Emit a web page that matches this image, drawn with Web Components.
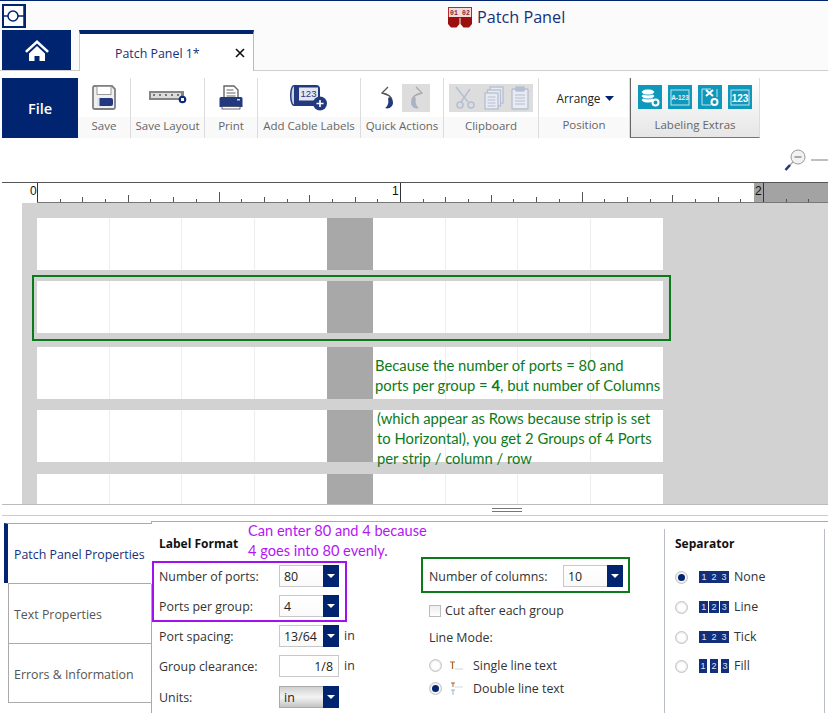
<!DOCTYPE html>
<html>
<head>
<meta charset="utf-8">
<title>Patch Panel</title>
<style>
    html, body { margin: 0; padding: 0; background: #fff; }
    body { width: 828px; height: 713px; overflow: hidden; font-family: "Open Sans", "Noto Sans", sans-serif; font-size: 12px; color: #333; }
    app-root { display: block; }
</style>
</head>
<body>
<app-root>
    <title-bar></title-bar>
    <tab-strip></tab-strip>
    <ribbon-bar>
        <ribbon-group width="53" label="Save">
            <svg width="24" height="25" viewBox="0 0 24 25">
                <path d="M1 2.500a1.500 1.500 0 0 1 1.500-1.500H20l3 3v18.500a1.500 1.500 0 0 1-1.500 1.500H2.500A1.500 1.500 0 0 1 1 22.500z" fill="#efefef" stroke="#808080" stroke-width="1.800"/>
                <rect x="5" y="1.500" width="14" height="8" fill="#fff" stroke="#9a9a9a"/>
                <rect x="5" y="13" width="16" height="8" rx="2" fill="#22397f"/>
                <rect x="5" y="13" width="2.500" height="8" fill="#dfe3ee"/>
            </svg>
        </ribbon-group>
        <ribbon-group width="74" label="Save Layout" top="12">
            <svg width="38" height="14" viewBox="0 0 38 14">
                <rect x="0" y="1" width="35" height="9" fill="#858585"/>
                <rect x="2" y="3" width="30" height="5" fill="#dcdcdc"/>
                <g fill="#777"><rect x="4" y="4" width="2" height="2"/><rect x="10" y="4" width="2" height="2"/><rect x="16" y="4" width="2" height="2"/><rect x="22" y="4" width="2" height="2"/><rect x="28" y="4" width="2" height="2"/></g>
                <circle cx="33.500" cy="9.500" r="3.800" fill="#0c2a78"/>
                <rect x="32" y="8" width="3" height="3" fill="#fff"/>
            </svg>
        </ribbon-group>
        <ribbon-group width="53" label="Print">
            <svg width="24" height="25" viewBox="0 0 24 25">
                <path d="M5 1h10l4 4v8H5z" fill="#fff" stroke="#666" stroke-width="1.400"/>
                <path d="M7.500 5h7M7.500 8h9M7.500 11h9" stroke="#666" stroke-width="1.200"/>
                <path d="M2 12h20a1.500 1.500 0 0 1 1.500 1.500V22H.5v-8.500A1.500 1.500 0 0 1 2 12z" fill="#22397f"/>
                <rect x="3" y="21.500" width="18" height="2.500" fill="#fff" stroke="#445" stroke-width=".8"/>
                <rect x="18" y="14" width="3" height="1.500" fill="#cfd6e8"/>
            </svg>
        </ribbon-group>
        <ribbon-group width="103" label="Add Cable Labels" top="6">
            <svg width="38" height="27" viewBox="0 0 38 27">
                <path d="M4 1h22a4 4 0 0 1 4 4v13a4 4 0 0 1-4 4H4C1.500 22 0 17 0 11.500S1.500 1 4 1z" fill="#22397f"/>
                <path d="M4 2.500C2.500 2.500 1.500 7 1.500 11.500S2.500 20.500 4 20.500" fill="#cdd3e3"/>
                <rect x="9" y="3.500" width="19" height="13" fill="#e4e7ef"/>
                <text x="18.500" y="13" font-size="9.500" text-anchor="middle" fill="#22397f" font-family="Liberation Sans, sans-serif">123</text>
                <circle cx="30" cy="19.500" r="7" fill="#22397f"/>
                <path d="M26.500 19.500h7M30 16v7" stroke="#fff" stroke-width="1.600"/>
            </svg>
        </ribbon-group>
        <ribbon-group width="83" label="Quick Actions" top="6">
            <div style="display:flex;gap:6px;align-items:center;margin-left:6px">
                <svg width="16" height="24" viewBox="0 0 16 24">
                    <path d="M8 1 2 7l5 2M2 7c5 1 10 3 10 8" fill="none" stroke="#555" stroke-width="1.300"/>
                    <path d="M9 11c4 2 5 6 3 9-2 2.500-5 3-7 2 3-2 4-6 3-9z" fill="#22397f"/>
                </svg>
                <div style="width:28px;height:28px;background:#dddddd;display:flex;align-items:center;justify-content:center">
                    <svg width="16" height="24" viewBox="0 0 16 24">
                        <path d="M8 1l6 6-5 2M14 7C9 8 4 10 4 15" fill="none" stroke="#a9a9a9" stroke-width="1.300"/>
                        <path d="M7 11c-4 2-5 6-3 9 2 2.500 5 3 7 2-3-2-4-6-3-9z" fill="#a9b2c6"/>
                    </svg>
                </div>
            </div>
        </ribbon-group>
        <ribbon-group width="95" label="Clipboard" top="6">
            <div style="width:84px;height:28px;background:#dddddd;display:flex;align-items:center;justify-content:space-around">
                <svg width="24" height="24" viewBox="0 0 24 24" fill="none" stroke="#b4bfd2" stroke-width="1.500">
                    <path d="M3 1l12 15M17 3 8 16"/>
                    <circle cx="7" cy="19" r="3"/><circle cx="18" cy="19" r="3"/>
                </svg>
                <svg width="20" height="24" viewBox="0 0 20 24" fill="#e8ebf1" stroke="#b4bfd2" stroke-width="1.300">
                    <rect x="6" y="1" width="13" height="16"/>
                    <rect x="3.500" y="4" width="13" height="16"/>
                    <rect x="1" y="7" width="13" height="16"/>
                    <path d="M3.500 11h8M3.500 14h8M3.500 17h8M3.500 20h8" stroke-width="1"/>
                </svg>
                <svg width="18" height="24" viewBox="0 0 18 24" fill="#e8ebf1" stroke="#b4bfd2" stroke-width="1.300">
                    <rect x="1" y="3" width="16" height="20" rx="1"/>
                    <rect x="5" y="1" width="8" height="4" fill="#b4bfd2"/>
                    <path d="M4 9h10M4 12h10M4 15h10M4 18h10" stroke-width="1"/>
                </svg>
            </div>
        </ribbon-group>
        <ribbon-group width="91" label="Position" top="12" low>
            <span style="color:#222;font-size:11.800px;display:flex;align-items:center;gap:5px;margin-left:3px">Arrange <svg width="9" height="5" viewBox="0 0 9 5"><path d="M0 0h9L4.500 5z" fill="#00246f"/></svg></span>
        </ribbon-group>
        <ribbon-group width="130" label="Labeling Extras" top="7" extras low>
            <div style="display:flex;gap:6px">
                <svg width="24" height="24" viewBox="0 0 24 24">
                    <rect width="24" height="24" fill="#0e99bc"/>
                    <g fill="#fff" stroke="#0e99bc" stroke-width=".8"><ellipse cx="10" cy="15" rx="6.500" ry="3"/><ellipse cx="10" cy="11" rx="6.500" ry="3"/><ellipse cx="10" cy="7" rx="6.500" ry="3"/></g>
                    <circle cx="17.500" cy="17.500" r="3" fill="none" stroke="#fff" stroke-width="2"/>
                </svg>
                <svg width="24" height="24" viewBox="0 0 24 24">
                    <rect width="24" height="24" fill="#0e99bc"/>
                    <rect x="3" y="5" width="18" height="15" fill="none" stroke="#bfe3ed"/>
                    <text x="12" y="15" font-size="6.500" font-weight="700" text-anchor="middle" fill="#e4f3f7" font-family="Liberation Sans, sans-serif">A-123</text>
                </svg>
                <svg width="24" height="24" viewBox="0 0 24 24">
                    <rect width="24" height="24" fill="#0e99bc"/>
                    <path d="M13 4H4v16h9" fill="none" stroke="#bfe3ed"/>
                    <path d="M19 4v8" stroke="#bfe3ed"/>
                    <path d="M8 5l7 6M15 5l-7 6" stroke="#fff" stroke-width="2"/>
                    <circle cx="16.500" cy="17" r="3" fill="none" stroke="#fff" stroke-width="2"/>
                </svg>
                <svg width="24" height="24" viewBox="0 0 24 24">
                    <rect width="24" height="24" fill="#0e99bc"/>
                    <rect x="3" y="5" width="18" height="15" fill="none" stroke="#bfe3ed"/>
                    <text x="12" y="16.500" font-size="10" font-weight="700" text-anchor="middle" fill="#fff" font-family="Liberation Sans, sans-serif">123</text>
                </svg>
            </div>
        </ribbon-group>
    </ribbon-bar>
    <zoom-bar></zoom-bar>
    <ruler-bar></ruler-bar>
    <label-canvas>
        <label-strip gap="15"></label-strip>
        <label-strip gap="11"></label-strip>
        <label-strip gap="14">
            <span style="display:block;padding:8px 0 0 2px">Because the number of ports = 80 and<br>ports per group = <b>4</b>, but number of Columns</span>
        </label-strip>
        <label-strip gap="11">
            <span style="display:block;padding:0 0 0 4px;margin-top:-2px">(which appear as Rows because strip is set<br>to Horizontal), you get 2 Groups of 4 Ports<br>per strip / column / row</span>
        </label-strip>
        <label-strip gap="12" height="30"></label-strip>
    </label-canvas>
    <split-grip></split-grip>
    <props-panel></props-panel>
</app-root>

<script>
    const NAVY = "#00246f";

    class TitleBar extends HTMLElement {
        constructor() {
            super();
            this.attachShadow({ mode: "open" });
            this.shadowRoot.innerHTML = `
                <style>
                    :host { display: flex; height: 29px; box-sizing: content-box; border-top: 1px solid ${NAVY}; background: #fbfbfb; position: relative; padding-left: 2px; }
                    .logo { margin-top: 3px; width: 24px; height: 24px; }
                    .title { position: absolute; left: 448px; top: 4px; display: flex; align-items: center; gap: 5px; color: #17307a; font-size: 16.200px; line-height: 24px; }
                </style>
                <svg class="logo" viewBox="0 0 24 24">
                    <rect x="0" y="0" width="24" height="24" fill="${NAVY}"/>
                    <rect x="2" y="2" width="20" height="20" fill="#fff"/>
                    <path d="M2 12h20M22 2v20" stroke="${NAVY}" stroke-width="1.500"/>
                    <circle cx="11" cy="12" r="5" fill="#fff" stroke="${NAVY}" stroke-width="1.500"/>
                </svg>
                <div class="title">
                    <svg width="24" height="21" viewBox="0 0 24 21">
                        <rect x="0.500" y="0.500" width="23" height="10" fill="#f4dcdc" stroke="#b52a2a"/>
                        <text x="6" y="8" font-size="6.500" font-weight="700" text-anchor="middle" fill="#8f1c1c" font-family="Liberation Mono, monospace">01</text>
                        <text x="18" y="8" font-size="6.500" font-weight="700" text-anchor="middle" fill="#8f1c1c" font-family="Liberation Mono, monospace">02</text>
                        <path d="M0 10h11.500v7l-3 3.500h-5.500l-3-3.500zM12.500 10H24v7l-3 3.500h-5.500l-3-3.500z" fill="#9c0f0f"/>
                    </svg>
                    <span>Patch Panel</span>
                </div>
            `;
        }
    }
    customElements.define("title-bar", TitleBar);

    class TabStrip extends HTMLElement {
        constructor() {
            super();
            this.attachShadow({ mode: "open" });
            this.shadowRoot.innerHTML = `
                <style>
                    :host { display: flex; height: 41px; background: #fbfbfb; padding-left: 2px; border-bottom: 1px solid #cfcfcf; box-sizing: border-box; }
                    .home { width: 69px; height: 40px; background: ${NAVY}; display: flex; align-items: center; justify-content: center; }
                    .tab { margin-left: 8px; width: 175px; height: 41px; box-sizing: border-box; background: #fff; border-top: 4px solid ${NAVY}; border-left: 1px solid #ccc; border-right: 1px solid #bbb; display: flex; align-items: center; color: #17307a; font-size: 12.400px; padding: 1px 0 0 35px; }
                    .close { margin-left: auto; margin-right: 8px; width: 10px; height: 10px; }
                </style>
                <div class="home">
                    <svg width="24" height="23" viewBox="0 0 24 23">
                        <path d="M12 1 0 12l1.800 1.800L12 4.500l10.200 9.300L24 12z" fill="#fff"/>
                        <path d="M4 14.500 12 7l8 7.500V22h-5.500v-5h-5v5H4z" fill="#fff"/>
                    </svg>
                </div>
                <div class="tab">
                    <span>Patch Panel 1*</span>
                    <svg class="close" viewBox="0 0 10 10"><path d="M1 1l8 8M9 1 1 9" stroke="#111" stroke-width="1.600"/></svg>
                </div>
            `;
        }
    }
    customElements.define("tab-strip", TabStrip);

    class RibbonBar extends HTMLElement {
        constructor() {
            super();
            this.attachShadow({ mode: "open" });
            this.shadowRoot.innerHTML = `
                <style>
                    :host { display: flex; height: 60px; margin-top: 7px; padding-left: 2px; background: #fff; }
                    .file { width: 76px; background: ${NAVY}; color: #fff; font-size: 14.500px; font-weight: 600; display: flex; align-items: center; justify-content: center; padding-top: 1px; box-sizing: border-box; }
                </style>
                <div class="file">File</div>
                <slot></slot>
            `;
        }
    }
    customElements.define("ribbon-bar", RibbonBar);

    class RibbonGroup extends HTMLElement {
        constructor() {
            super();
            this.attachShadow({ mode: "open" });
            this.shadowRoot.innerHTML = `
                <style>
                    :host { display: flex; flex-direction: column; box-sizing: border-box; border-right: 1px solid #dcdcdc; height: 60px; }
                    :host([extras]) { border-left: 1px solid #666; border-bottom: 1px solid #777; border-right: 1px solid #ddd; background: linear-gradient(#fff, #e6e6e6); }
                    .top { height: 39px; box-sizing: border-box; display: flex; justify-content: center; align-items: flex-start; }
                    .label { flex: 1; background: #f9f9f9; color: #666; font-size: 11.500px; line-height: 17px; text-align: center; white-space: nowrap; }
                    :host([low]) .label { line-height: 15px; }
                    :host([extras]) .label { background: none; }
                </style>
                <div class="top"><slot></slot></div>
                <div class="label"></div>
            `;
        }

        connectedCallback() {
            this.style.width = `${this.getAttribute("width")}px`;
            this.shadowRoot.querySelector(".label").textContent = this.getAttribute("label");
            this.shadowRoot.querySelector(".top").style.paddingTop = `${this.getAttribute("top") || 7}px`;
        }
    }
    customElements.define("ribbon-group", RibbonGroup);

    class ZoomBar extends HTMLElement {
        constructor() {
            super();
            this.attachShadow({ mode: "open" });
            this.shadowRoot.innerHTML = `
                <style>
                    :host { display: flex; height: 44px; justify-content: flex-end; align-items: center; background: #fff; }
                </style>
                <svg width="46" height="24" viewBox="0 0 46 24">
                    <circle cx="16" cy="9" r="7" fill="#f2f2f2" stroke="#999"/>
                    <path d="M12.500 9h7" stroke="#888" stroke-width="1.400"/>
                    <path d="M11 14 4 21" stroke="#aaa" stroke-width="1.500"/>
                    <path d="M8 17 3.500 22" stroke="#22397f" stroke-width="2.600"/>
                    <path d="M29 12h17" stroke="#aaa" stroke-width="1.500"/>
                </svg>
            `;
        }
    }
    customElements.define("zoom-bar", ZoomBar);

    class RulerBar extends HTMLElement {
        constructor() {
            super();
            this.attachShadow({ mode: "open" });
            let ticks = "";
            const inch = 363;
            for (let i = 0; i <= 32; i++) {
                const x = 37.5 + Math.round(i * inch / 16);
                let h = 3;
                if (i % 16 === 0) h = 19;
                else if (i % 8 === 0) h = 10;
                else if (i % 4 === 0) h = 7;
                else if (i % 2 === 0) h = 5;
                ticks += `<path d="M${x} 20V${20 - h}" stroke="${i % 16 === 0 ? "#333" : "#555"}" stroke-width="1"/>`;
            }
            for (let i = 33; i < 39; i++) {
                const x = 37.5 + Math.round(i * inch / 16);
                ticks += `<path d="M${x} 20V17" stroke="#555"/>`;
            }
            this.shadowRoot.innerHTML = `
                <style>
                    :host { display: block; height: 21px; }
                    svg { display: block; }
                    text { font: 12px "Liberation Sans", sans-serif; fill: #111; }
                </style>
                <svg width="828" height="21" viewBox="0 0 828 21">
                    <rect x="37" y="1" width="717" height="19" fill="#fff"/>
                    <rect x="754" y="1" width="74" height="19" fill="#a3a3a3"/>
                    <path d="M2 .5H828" stroke="#555"/>
                    <path d="M37 20.500H828" stroke="#777"/>
                    ${ticks}
                    <text x="30" y="13">0</text>
                    <text x="392" y="13">1</text>
                    <text x="755" y="13">2</text>
                </svg>
            `;
        }
    }
    customElements.define("ruler-bar", RulerBar);

    class LabelCanvas extends HTMLElement {
        constructor() {
            super();
            this.attachShadow({ mode: "open" });
            this.shadowRoot.innerHTML = `
                <style>
                    :host { display: block; height: 301px; margin-left: 22px; background: #d2d2d2; position: relative; overflow: hidden; padding-left: 15px; box-sizing: border-box; }
                    .mark { position: absolute; left: 10px; top: 72px; width: 639px; height: 66px; box-sizing: border-box; border: 2px solid #0a7a1a; }
                </style>
                <slot></slot>
                <div class="mark"></div>
            `;
        }
    }
    customElements.define("label-canvas", LabelCanvas);

    class LabelStrip extends HTMLElement {
        constructor() {
            super();
            this.attachShadow({ mode: "open" });
            this.shadowRoot.innerHTML = `
                <style>
                    :host { display: grid; grid-template-columns: 72.500px 72.500px 72.500px 72.500px 46px 72.500px 72.500px 72.500px 1fr; width: 626px; height: 52px; position: relative; background: #fff; }
                    div { box-sizing: border-box; border-right: 1px solid #eee; }
                    .gap { background: #a8a8a8; border: 0; }
                    .last { border: 0; }
                    .note { position: absolute; left: 336px; top: 0; right: 0; color: #0c7a1c; font-family: Lato, "Liberation Sans", sans-serif; font-size: 14.800px; line-height: 20px; white-space: nowrap; }
                </style>
                <div></div><div></div><div></div><div style="border:0"></div><div class="gap"></div><div></div><div></div><div></div><div class="last"></div>
                <section class="note"><slot></slot></section>
            `;
        }

        connectedCallback() {
            this.style.marginTop = `${this.getAttribute("gap")}px`;
            if (this.hasAttribute("height")) this.style.height = `${this.getAttribute("height")}px`;
        }
    }
    customElements.define("label-strip", LabelStrip);

    class SplitGrip extends HTMLElement {
        constructor() {
            super();
            this.attachShadow({ mode: "open" });
            this.shadowRoot.innerHTML = `
                <style>
                    :host { display: flex; height: 12px; box-sizing: border-box; border-top: 1px solid #bbb; border-bottom: 1px solid #ccc; margin-left: 2px; padding: 3px 0 0 490px; background: #fff; }
                    i { display: block; width: 30px; border-top: 1px solid #777; border-bottom: 1px solid #777; height: 2px; }
                </style>
                <i></i>
            `;
        }
    }
    customElements.define("split-grip", SplitGrip);

    class DropBox extends HTMLElement {
        constructor() {
            super();
            this.attachShadow({ mode: "open" });
            this.shadowRoot.innerHTML = `
                <style>
                    :host { display: flex; width: 60px; height: 22px; box-sizing: border-box; border: 1px solid #c8c8c8; background: linear-gradient(#fff, #fafafa); font-size: 12.400px; color: #222; align-items: center; }
                    :host([metal]) { background: linear-gradient(#d0d0d0, #f4f4f4 50%, #c4c4c4); border-color: #aaa; }
                    span { flex: 1; padding: 2px 0 0 4px; }
                    b { width: 16px; height: 22px; margin-right: -1px; background: ${NAVY}; display: flex; align-items: center; justify-content: center; }
                </style>
                <span><slot></slot></span>
                <b><svg width="8" height="4" viewBox="0 0 8 4"><path d="M0 0h8L4 4z" fill="#fff"/></svg></b>
            `;
        }
    }
    customElements.define("drop-box", DropBox);

    class RadioDot extends HTMLElement {
        constructor() {
            super();
            this.attachShadow({ mode: "open" });
            this.shadowRoot.innerHTML = `
                <style>
                    :host { display: flex; width: 13px; height: 13px; box-sizing: border-box; border: 1px solid #c4c4c4; border-radius: 50%; background: #fff; box-shadow: inset 0 0 2px #bbb; align-items: center; justify-content: center; flex: none; }
                    :host([on]) i { display: block; width: 7px; height: 7px; border-radius: 50%; background: ${NAVY}; }
                </style>
                <i></i>
            `;
        }
    }
    customElements.define("radio-dot", RadioDot);

    class SepSample extends HTMLElement {
        constructor() {
            super();
            this.attachShadow({ mode: "open" });
        }

        connectedCallback() {
            const kind = this.getAttribute("kind");
            const gap = kind === "fill" ? 3 : kind === "line" ? 1 : 0;
            const cells = ["1", "2", "3"].map((n) => `<span>${n}</span>`).join("");
            this.shadowRoot.innerHTML = `
                <style>
                    :host { display: flex; width: 30px; height: 12px; gap: ${gap}px; flex: none; }
                    :host([kind="fill"]) { height: 14px; }
                    span { flex: 1; background: #132f7c; color: #dfe5f2; font: 9px/12px "Liberation Sans", sans-serif; text-align: center; }
                    :host([kind="fill"]) span { line-height: 14px; }
                </style>
                ${cells}
            `;
        }
    }
    customElements.define("sep-sample", SepSample);

    class PropsPanel extends HTMLElement {
        constructor() {
            super();
            this.attachShadow({ mode: "open" });
            this.shadowRoot.innerHTML = `
                <style>
                    :host { display: flex; height: 197px; position: relative; background: #fff; font-size: 12.400px; color: #333; line-height: 16px; }
                    .tabs { width: 151px; padding: 7px 0 0 4px; box-sizing: border-box; flex: none; }
                    .tab { height: 60px; box-sizing: border-box; border: 1px solid #aaa; border-bottom: 0; border-right: 0; margin-left: 4px; padding: 2px 0 0 5px; display: flex; align-items: center; color: #555; white-space: nowrap; }
                    .tab:last-child { height: 60px; border-bottom: 1px solid #aaa; padding-top: 3px; }
                    .tab.on { border-left: 4px solid ${NAVY}; margin-left: 0; padding-left: 6px; color: #17307a; }
                    .body { flex: 1; display: flex; position: relative; border-top: 1px solid #aaa; margin-top: 5px; border-left: 1px solid #aaa; }
                    .blank { position: absolute; left: -1px; top: 2px; width: 1px; height: 60px; background: #fff; }
                    .col1 { width: 269px; padding: 14px 0 0 7px; box-sizing: border-box; flex: none; }
                    .col2 { width: 243px; padding: 43px 0 0 8px; box-sizing: border-box; flex: none; }
                    .col3 { width: 161px; margin-top: 7px; border-left: 1px solid #b8bcc4; border-right: 1px solid #b8bcc4; padding: 7px 0 0 10px; box-sizing: border-box; flex: none; }
                    h4 { margin: 0; font-size: 12px; line-height: 16px; font-weight: 700; color: #111; }
                    .rows { display: flex; flex-direction: column; gap: 8px; margin-top: 13px; }
                    .row { display: flex; align-items: center; height: 22px; }
                    .rows .row:last-child { margin-top: 1px; }
                    .row label { width: 120px; padding-top: 1px; }
                    .unit { margin-left: 5px; }
                    .text-box { width: 60px; height: 22px; box-sizing: border-box; border: 1px solid #c8c8c8; text-align: right; padding: 3px 5px 0 0; color: #222; }
                    .check { display: flex; align-items: center; gap: 4px; margin-top: 16px; height: 16px; }
                    .check i { width: 12px; height: 12px; border: 1px solid #bbb; box-sizing: border-box; background: linear-gradient(#eee, #fff); }
                    .mode { margin-top: 11px; }
                    .line { display: flex; align-items: center; height: 23px; }
                    .line svg { margin: 0 10px 0 7px; flex: none; }
                    .modes { margin-top: 8px; }
                    .sep-rows { display: flex; flex-direction: column; margin-top: 10px; }
                    .sep-row { display: flex; align-items: center; height: 30px; gap: 5px; }
                    .sep-row:last-child { margin-top: -1px; }
                    .sep-row radio-dot { margin-right: 6px; }
                    .purple { position: absolute; left: 152px; top: 45px; width: 195px; height: 61px; box-sizing: border-box; border: 2px solid #a010f0; pointer-events: none; }
                    .green { position: absolute; left: 421px; top: 41px; width: 209px; height: 36px; box-sizing: border-box; border: 2px solid #0a7a1a; }
                    .note { position: absolute; left: 248px; top: 5px; color: #b516f5; font-family: Lato, "Liberation Sans", sans-serif; font-size: 14.600px; line-height: 20px; white-space: nowrap; }
                </style>
                <div class="tabs">
                    <div class="tab on">Patch Panel Properties</div>
                    <div class="tab">Text Properties</div>
                    <div class="tab">Errors &amp; Information</div>
                </div>
                <div class="body">
                    <div class="blank"></div>
                    <div class="col1">
                        <h4>Label Format</h4>
                        <div class="rows">
                            <div class="row"><label>Number of ports:</label><drop-box>80</drop-box></div>
                            <div class="row"><label>Ports per group:</label><drop-box>4</drop-box></div>
                            <div class="row"><label>Port spacing:</label><drop-box>13/64</drop-box><span class="unit">in</span></div>
                            <div class="row"><label>Group clearance:</label><div class="text-box">1/8</div><span class="unit">in</span></div>
                            <div class="row"><label>Units:</label><drop-box metal>in</drop-box></div>
                        </div>
                    </div>
                    <div class="col2">
                        <div class="row"><label style="width:134px">Number of columns:</label><drop-box>10</drop-box></div>
                        <div class="check"><i></i>Cut after each group</div>
                        <div class="mode">Line Mode:</div>
                        <div class="modes">
                            <div class="line">
                                <radio-dot></radio-dot>
                                <svg width="14" height="10" viewBox="0 0 14 10"><path d="M1 1h5M3.500 1v7" stroke="#a5652d" stroke-width="1.200"/><path d="M6 8h8" stroke="#cfd6dd"/></svg>
                                <span>Single line text</span>
                            </div>
                            <div class="line">
                                <radio-dot on></radio-dot>
                                <svg width="14" height="14" viewBox="0 0 14 14"><path d="M2 1h4M4 1v4" stroke="#a5652d" stroke-width="1"/><path d="M6 5h8" stroke="#d3d8de"/><path d="M2 8h4M4 8v5" stroke="#8fb6d6" stroke-width="1"/></svg>
                                <span>Double line text</span>
                            </div>
                        </div>
                    </div>
                    <div class="col3">
                        <h4>Separator</h4>
                        <div class="sep-rows">
                            <div class="sep-row"><radio-dot on></radio-dot><sep-sample kind="none"></sep-sample><span>None</span></div>
                            <div class="sep-row"><radio-dot></radio-dot><sep-sample kind="line"></sep-sample><span>Line</span></div>
                            <div class="sep-row"><radio-dot></radio-dot><sep-sample kind="tick"></sep-sample><span>Tick</span></div>
                            <div class="sep-row"><radio-dot></radio-dot><sep-sample kind="fill"></sep-sample><span>Fill</span></div>
                        </div>
                    </div>
                </div>
                <div class="purple"></div>
                <div class="green"></div>
                <div class="note">Can enter 80 and 4 because<br>4 goes into 80 evenly.</div>
            `;
        }
    }
    customElements.define("props-panel", PropsPanel);
</script>
</body>
</html>
